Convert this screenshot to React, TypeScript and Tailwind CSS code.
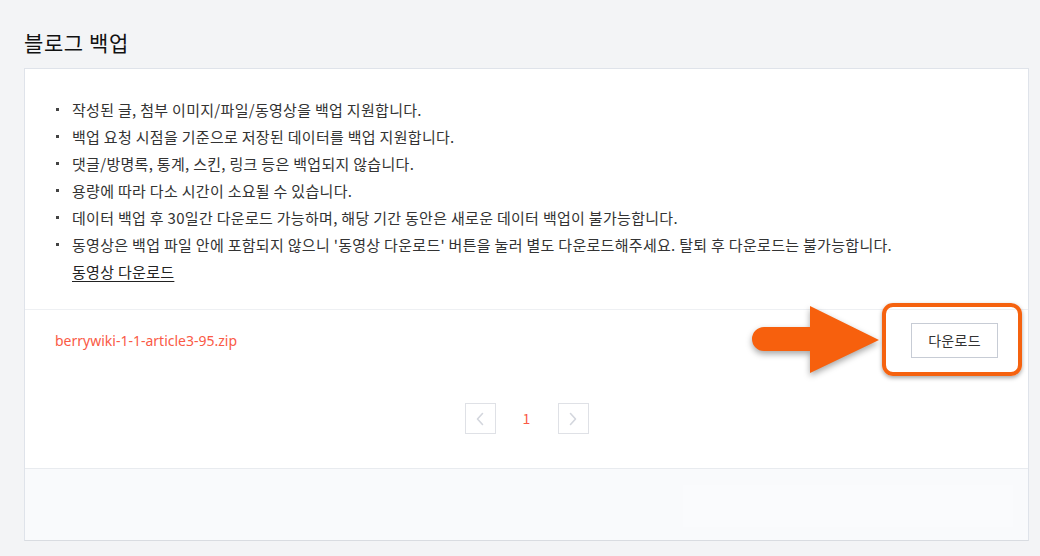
import React from 'react';

const notes = [
  '작성된 글, 첨부 이미지/파일/동영상을 백업 지원합니다.',
  '백업 요청 시점을 기준으로 저장된 데이터를 백업 지원합니다.',
  '댓글/방명록, 통계, 스킨, 링크 등은 백업되지 않습니다.',
  '용량에 따라 다소 시간이 소요될 수 있습니다.',
  '데이터 백업 후 30일간 다운로드 가능하며, 해당 기간 동안은 새로운 데이터 백업이 불가능합니다.',
  "동영상은 백업 파일 안에 포함되지 않으니 '동영상 다운로드' 버튼을 눌러 별도 다운로드해주세요. 탈퇴 후 다운로드는 불가능합니다.",
];

function Chevron({ dir }: { dir: 'left' | 'right' }) {
  return (
    <svg width="10" height="14" viewBox="0 0 10 14" fill="none">
      <path
        d={dir === 'left' ? 'M7.5 1.5 2.5 7l5 5.5' : 'M2.5 1.5 7.5 7l-5 5.5'}
        stroke="#d3d6dd"
        strokeWidth="1.6"
        strokeLinecap="round"
        strokeLinejoin="round"
      />
    </svg>
  );
}

export default function App() {
  return (
    <div
      className="w-[1040px] h-[556px] bg-[#f3f4f6] pl-[24px] pr-[11px] pt-[28px] text-[#333]"
      style={{ fontFamily: '"Noto Sans CJK KR", "Noto Sans", sans-serif' }}
    >
      <h1 className="text-[21px] leading-[29px] tracking-[0.6px] text-[#111] mb-[11px]">블로그 백업</h1>

      <div className="border border-[#dfe3ea] border-b-[#d9dce1] bg-white">
        {/* Notes */}
        <div className="pt-[27px] pb-[24px] pl-[31px] pr-[30px]">
          <ul>
            {notes.map((n, i) => (
              <li key={i} className="flex items-start text-[15px] leading-[27px] text-[#333]">
                <span className="mt-[12px] w-[3px] h-[3px] bg-[#444] shrink-0 mr-[13px]" />
                <span className="tracking-[0.3px]">{n}</span>
              </li>
            ))}
          </ul>
          <a className="block pl-[16px] text-[15px] leading-[27px] tracking-[0.3px] text-[#222] underline underline-offset-[3px]">
            동영상 다운로드
          </a>
        </div>

        <div className="border-t border-[#eef0f3]" />

        {/* File row */}
        <div className="relative flex items-center justify-between pl-[30px] pr-[30px] py-[13px]">
          <span className="text-[14px] text-[#fa5a46]" style={{ fontFamily: '"Noto Sans", "Noto Sans CJK KR", sans-serif' }}>
            berrywiki-1-1-article3-95.zip
          </span>
          <button className="w-[87px] h-[35px] border border-[#c7ccd5] bg-white text-[14px] tracking-[0.3px] text-[#333]">
            다운로드
          </button>

          {/* Highlight overlay */}
          <div className="absolute top-[-7px] right-[6px] w-[140px] h-[73px] rounded-[11px] border-[4px] border-[#f5620f] shadow-[0_2px_4px_rgba(0,0,0,0.35)] pointer-events-none" />
          <svg
            className="absolute top-[-5px] right-[146px] pointer-events-none"
            width="132"
            height="72"
            viewBox="0 0 132 72"
            style={{ filter: 'drop-shadow(0 3px 3px rgba(0,0,0,0.35))' }}
          >
            <path
              d="M14 22 H60 V1 L129 35 L60 68 V46 H14 A12 12 0 0 1 14 22 Z"
              fill="#f7600d"
            />
          </svg>
        </div>

        {/* Pagination */}
        <div className="flex justify-center mt-[32px] pb-[34px]">
          <span className="w-[31px] h-[31px] border border-[#dfe1e6] flex items-center justify-center">
            <Chevron dir="left" />
          </span>
          <span className="w-[62px] h-[31px] flex items-center justify-center text-[14px] text-[#fa5a46]">1</span>
          <span className="w-[31px] h-[31px] border border-[#dfe1e6] flex items-center justify-center">
            <Chevron dir="right" />
          </span>
        </div>

        {/* Footer area */}
        <div className="h-[72px] border-t border-[#e8ebef] bg-[#f9fafc] flex justify-end pr-[15px] pt-[16px]">
          <div className="w-[330px] h-[42px] bg-[#fafbfd]" />
        </div>
      </div>
    </div>
  );
}
